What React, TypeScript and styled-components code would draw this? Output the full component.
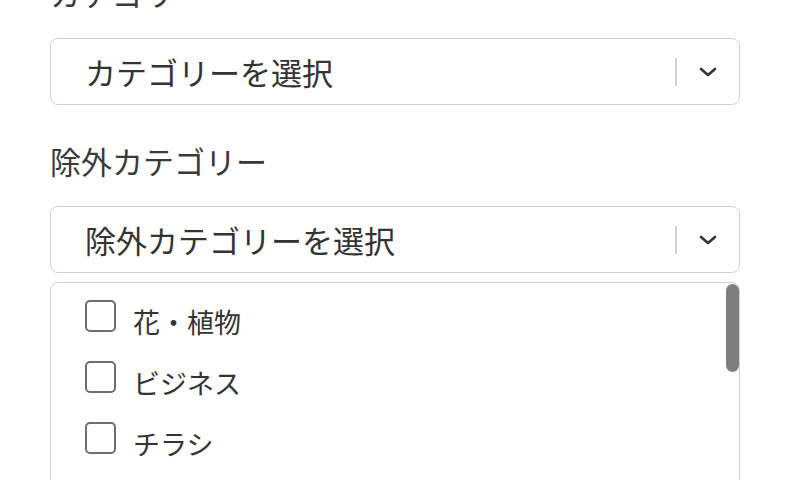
import React from "react";
import styled, { createGlobalStyle } from "styled-components";

const GlobalStyle = createGlobalStyle`
  html, body {
    margin: 0;
    padding: 0;
    background: #ffffff;
    overflow: hidden;
  }
  body {
    font-family: "Noto Sans CJK JP", "Noto Sans", sans-serif;
    color: #333333;
  }
`;

const Page = styled.div`
  width: 790px;
  height: 480px;
  overflow: hidden;
`;

const Form = styled.div`
  margin-top: -27px;
  padding: 0 50px;
  display: flex;
  flex-direction: column;
`;

const Label = styled.div`
  font-size: 31px;
  line-height: 40px;
  color: #3a3a3a;
  margin-bottom: 25px;
`;

const SelectBox = styled.div<{ $gap: number }>`
  height: 67px;
  box-sizing: border-box;
  border: 1.5px solid #d2d2d2;
  border-radius: 8px;
  display: flex;
  align-items: center;
  padding-left: 34px;
  margin-bottom: ${(p) => p.$gap}px;
`;

const Placeholder = styled.div`
  flex: 1;
  font-size: 31px;
  color: #333333;
`;

const Separator = styled.div`
  width: 2px;
  height: 28px;
  background: #d0d0d0;
`;

const Chevron = styled.div`
  width: 62px;
  display: flex;
  justify-content: center;
  align-items: center;
`;

const ListPanel = styled.div`
  position: relative;
  height: 260px;
  box-sizing: border-box;
  border: 1.5px solid #d2d2d2;
  border-radius: 8px;
  padding: 17px 0 0 34px;
  display: flex;
  flex-direction: column;
  gap: 29px;
`;

const Thumb = styled.div`
  position: absolute;
  top: 1px;
  right: 0px;
  width: 13px;
  height: 88px;
  border-radius: 7px;
  background: #7f7f7f;
`;

const Item = styled.label`
  display: flex;
  align-items: center;
  height: 32px;
  gap: 17px;
`;

const Box = styled.span`
  width: 31px;
  height: 32px;
  box-sizing: border-box;
  border: 2px solid #6e6e6e;
  border-radius: 5px;
  flex-shrink: 0;
`;

const ItemText = styled.span`
  font-size: 27px;
  padding-top: 10px;
  color: #333333;
`;

const ChevronIcon = () => (
  <svg width="18" height="10" viewBox="0 0 18 10">
    <path d="M2 2 L9 8 L16 2" fill="none" stroke="#333" strokeWidth="2.6" strokeLinecap="round" strokeLinejoin="round" />
  </svg>
);

const items = ["花・植物", "ビジネス", "チラシ"];

export default function App() {
  return (
    <Page>
      <GlobalStyle />
      <Form>
        <Label>カテゴリ</Label>
        <SelectBox $gap={36}>
          <Placeholder>カテゴリーを選択</Placeholder>
          <Separator />
          <Chevron>
            <ChevronIcon />
          </Chevron>
        </SelectBox>
        <Label>除外カテゴリー</Label>
        <SelectBox $gap={9}>
          <Placeholder>除外カテゴリーを選択</Placeholder>
          <Separator />
          <Chevron>
            <ChevronIcon />
          </Chevron>
        </SelectBox>
        <ListPanel>
          <Thumb />
          {items.map((item) => (
            <Item key={item}>
              <Box />
              <ItemText>{item}</ItemText>
            </Item>
          ))}
        </ListPanel>
      </Form>
    </Page>
  );
}
